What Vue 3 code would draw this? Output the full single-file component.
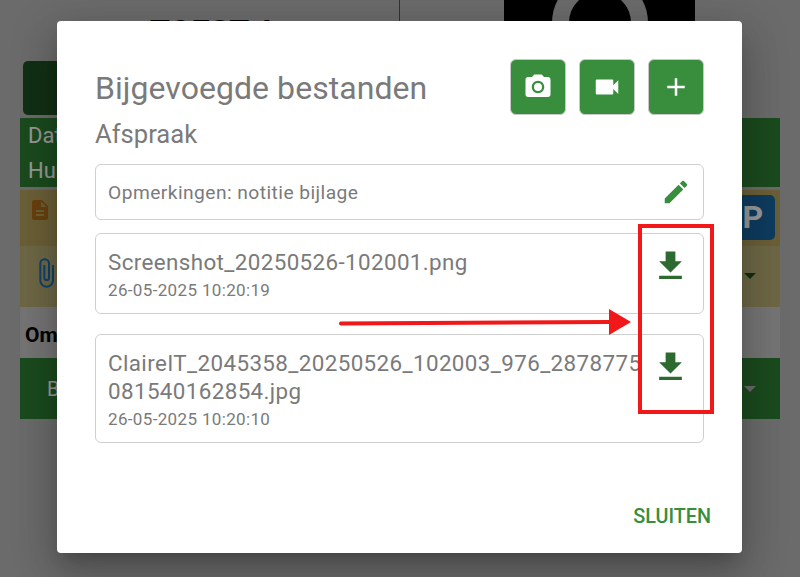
<template>
  <div class="screen">
    <div class="page">
      <header class="top">
        <div class="top-title">TOEST A</div>
        <div class="top-photo">
          <div class="ring"></div>
        </div>
      </header>
      <div class="action-row"><div class="dark-btn"></div></div>
      <section class="green-row">
        <div>Datum</div>
        <div>Huur</div>
      </section>
      <section class="doc-row">
        <svg class="doc-icon" viewBox="0 0 24 24"><path d="M14 2H6c-1.100 0-2 .9-2 2v16c0 1.100.9 2 2 2h12c1.100 0 2-.9 2-2V8l-6-6zm2 16H8v-2h8v2zm0-4H8v-2h8v2zm-3-5V3.500L18.500 9H13z" /></svg>
        <div class="badge">P</div>
      </section>
      <section class="clip-row">
        <svg class="clip-icon" viewBox="0 0 24 24"><path d="M16.500 6v11.500c0 2.210-1.790 4-4 4s-4-1.790-4-4V5a2.500 2.500 0 0 1 5 0v10.500c0 .55-.45 1-1 1s-1-.45-1-1V6H10v9.500a2.500 2.500 0 0 0 5 0V5c0-2.210-1.790-4-4-4S7 2.790 7 5v12.500c0 3.040 2.460 5.500 5.500 5.500s5.500-2.460 5.500-5.500V6h-1.500z" /></svg>
        <span class="caret dark"></span>
      </section>
      <section class="om-row">Omschrijving</section>
      <section class="bottom-row">
        <span>Bekijk</span>
        <span class="caret light"></span>
      </section>
    </div>

    <div class="scrim"></div>

    <main class="dialog">
      <div class="head">
        <h1>Bijgevoegde bestanden</h1>
        <div class="actions">
          <button class="square"><svg viewBox="0 0 24 24"><path d="M12 15.200a3.200 3.200 0 1 0 0-6.400 3.200 3.200 0 0 0 0 6.400z" /><path d="M9 2 7.170 4H4c-1.100 0-2 .9-2 2v12c0 1.100.9 2 2 2h16c1.100 0 2-.9 2-2V6c0-1.100-.9-2-2-2h-3.170L15 2H9zm3 15c-2.760 0-5-2.240-5-5s2.240-5 5-5 5 2.240 5 5-2.240 5-5 5z" /></svg></button>
          <button class="square"><svg viewBox="0 0 24 24"><path d="M17 10.500V7c0-.55-.45-1-1-1H4c-.55 0-1 .45-1 1v10c0 .55.45 1 1 1h12c.55 0 1-.45 1-1v-3.500l4 4v-11l-4 4z" /></svg></button>
          <button class="square"><svg viewBox="0 0 24 24"><path d="M19 13h-6v6h-2v-6H5v-2h6V5h2v6h6v2z" /></svg></button>
        </div>
      </div>
      <h2>Afspraak</h2>
      <div class="card note">
        <span>Opmerkingen: notitie bijlage</span>
        <svg class="pencil" viewBox="0 0 24 24"><path d="M3 17.250V21h3.750L17.810 9.940l-3.750-3.750L3 17.250zM20.710 7.040c.39-.39.39-1.020 0-1.410l-2.340-2.340c-.39-.39-1.020-.39-1.410 0l-1.830 1.830 3.750 3.750 1.830-1.830z" /></svg>
      </div>
      <div v-for="file in files" :key="file.name" class="card file">
        <div class="file-text">
          <div class="file-name">{{ file.name }}</div>
          <div class="file-date">{{ file.date }}</div>
        </div>
        <svg class="download" viewBox="0 0 24 24"><path d="M19 9h-4V3H9v6H5l7 7 7-7zM5 18v2h14v-2H5z" /></svg>
      </div>
      <div class="footer"><button class="close">SLUITEN</button></div>
    </main>

    <div class="red-box"></div>
    <svg class="red-arrow" viewBox="0 0 300 30" width="300" height="30">
      <path d="M3 15.500 272 14" stroke="#f01818" stroke-width="4" stroke-linecap="round" fill="none" />
      <path d="M271 1 293 14 271 27z" fill="#f01818" />
    </svg>
  </div>
</template>

<script setup>
const files = [
  { name: 'Screenshot_20250526-102001.png', date: '26-05-2025 10:20:19' },
  { name: 'ClaireIT_2045358_20250526_102003_976_2878775081540162854.jpg', date: '26-05-2025 10:20:10' },
]
</script>

<style scoped>
.screen {
  position: relative;
  width: 800px;
  height: 577px;
  overflow: hidden;
  font-family: Roboto, "Liberation Sans", sans-serif;
  background: #b2b2b2;
}
.page {
  padding: 0 20px;
  color: #fff;
}
.top {
  height: 61px;
  display: flex;
  justify-content: space-between;
  position: relative;
}
.top-title {
  margin-left: 130px;
  padding-top: 12px;
  font-size: 32px;
  font-weight: 700;
  color: #000;
}
.top::after {
  content: "";
  position: absolute;
  left: 379px;
  top: 0;
  width: 1px;
  height: 40px;
  background: #555;
}
.top-photo {
  position: relative;
  width: 191px;
  height: 61px;
  margin-right: 85px;
  background: #000;
  overflow: hidden;
}
.ring {
  position: absolute;
  left: 47.5px;
  top: -25px;
  width: 62px;
  height: 62px;
  border: 17px solid #b2b2b2;
  border-radius: 50%;
}
.action-row {
  height: 57px;
  padding-left: 3px;
}
.dark-btn {
  height: 54px;
  width: 200px;
  border-radius: 5px;
  background: #1e5124;
}
.green-row {
  height: 69px;
  padding: 0 8px;
  background: #2e7d32;
  font-size: 22px;
  line-height: 35px;
  margin-bottom: 3px;
}
.doc-row {
  height: 56px;
  padding: 0 5px 0 8px;
  display: flex;
  justify-content: space-between;
  background: #b2a05c;
}
.doc-icon {
  width: 24px;
  height: 24px;
  margin-top: 8px;
  fill: #b06c18;
}
.badge {
  width: 70px;
  height: 45px;
  margin-top: 5px;
  border-radius: 5px;
  background: #1a659f;
  text-align: right;
  padding-right: 12px;
  box-sizing: border-box;
  font-size: 32px;
  font-weight: 700;
  line-height: 45px;
}
.clip-row {
  height: 61px;
  padding: 0 24px 0 10px;
  display: flex;
  justify-content: space-between;
  background: #b7ad75;
}
.clip-icon {
  width: 32px;
  height: 32px;
  margin-top: 10.5px;
  fill: #1b6fb8;
}
.caret {
  width: 0;
  height: 0;
  border-left: 6px solid transparent;
  border-right: 6px solid transparent;
  border-top: 6px solid #000;
}
.caret.dark {
  margin-top: 27px;
  border-top-color: #1e5124;
}
.caret.light {
  border-top-color: #b2b2b2;
}
.om-row {
  height: 51px;
  padding: 0 5px;
  background: #c4c4c4;
  color: #000;
  font-size: 21px;
  font-weight: 700;
  line-height: 56px;
}
.bottom-row {
  height: 61px;
  padding: 0 24px 0 27px;
  display: flex;
  justify-content: space-between;
  align-items: center;
  background: #2e7d32;
  font-size: 20px;
}
.scrim {
  position: absolute;
  inset: 0;
  background: rgba(0, 0, 0, 0.4);
}
.dialog {
  position: absolute;
  left: 57px;
  top: 21px;
  width: 685px;
  height: 532px;
  box-sizing: border-box;
  padding: 38px 38px 0;
  display: flex;
  flex-direction: column;
  background: #fff;
  border-radius: 4px;
  box-shadow: 0 11px 15px -7px rgba(0, 0, 0, 0.2), 0 24px 38px 3px rgba(0, 0, 0, 0.14), 0 9px 46px 8px rgba(0, 0, 0, 0.12);
  color: #7a7a7a;
}
.head {
  display: flex;
  justify-content: space-between;
  align-items: center;
  height: 56px;
}
h1 {
  margin: 0;
  font-size: 32px;
  font-weight: 400;
  line-height: 60px;
  padding-top: 2px;
  letter-spacing: 0.05px;
}
.actions {
  display: flex;
  gap: 13px;
}
.square {
  width: 56px;
  height: 56px;
  padding: 0;
  display: flex;
  align-items: center;
  justify-content: center;
  background: #388e3c;
  border: 1px solid #c8c8c8;
  border-radius: 6px;
}
.square svg {
  width: 30px;
  height: 30px;
  fill: #fff;
}
h2 {
  margin: 4px 0 15px;
  font-size: 25.6px;
  font-weight: 400;
  line-height: 30px;
}
.card {
  width: 609px;
  box-sizing: border-box;
  border: 1px solid #cfcfcf;
  border-radius: 6px;
}
.note {
  height: 56px;
  padding: 0 12px;
  display: flex;
  align-items: center;
  justify-content: space-between;
  font-size: 19.2px;
  letter-spacing: 0.45px;
  margin-bottom: 13px;
}
.pencil {
  width: 30px;
  height: 30px;
  fill: #388e3c;
}
.file {
  display: flex;
  align-items: flex-start;
  padding: 15px 13px 11px 12px;
  margin-bottom: 20px;
}
.file-text {
  width: 534px;
  flex: none;
}
.file-name {
  font-size: 22.4px;
  line-height: 27.5px;
  letter-spacing: 0.38px;
  word-break: break-all;
}
.file-date {
  margin-top: 1.5px;
  font-size: 17px;
  line-height: 24px;
  letter-spacing: 0.35px;
}
.download {
  width: 40px;
  height: 40px;
  margin-left: 9px;
  margin-top: -3px;
  fill: #2d6a2f;
}
.footer {
  margin-top: auto;
  display: flex;
  justify-content: flex-end;
  padding-bottom: 25px;
  margin-right: -7px;
}
.close {
  padding: 0;
  background: none;
  border: 0;
  font: 500 19.8px Roboto, "Liberation Sans", sans-serif;
  color: #388e3c;
}
.red-box {
  position: absolute;
  left: 638px;
  top: 224px;
  width: 76px;
  height: 190px;
  box-sizing: border-box;
  border: 4px solid #f01818;
}
.red-arrow {
  position: absolute;
  left: 338px;
  top: 308px;
}
</style>

<style>
html, body { margin: 0; overflow: hidden; }
</style>
